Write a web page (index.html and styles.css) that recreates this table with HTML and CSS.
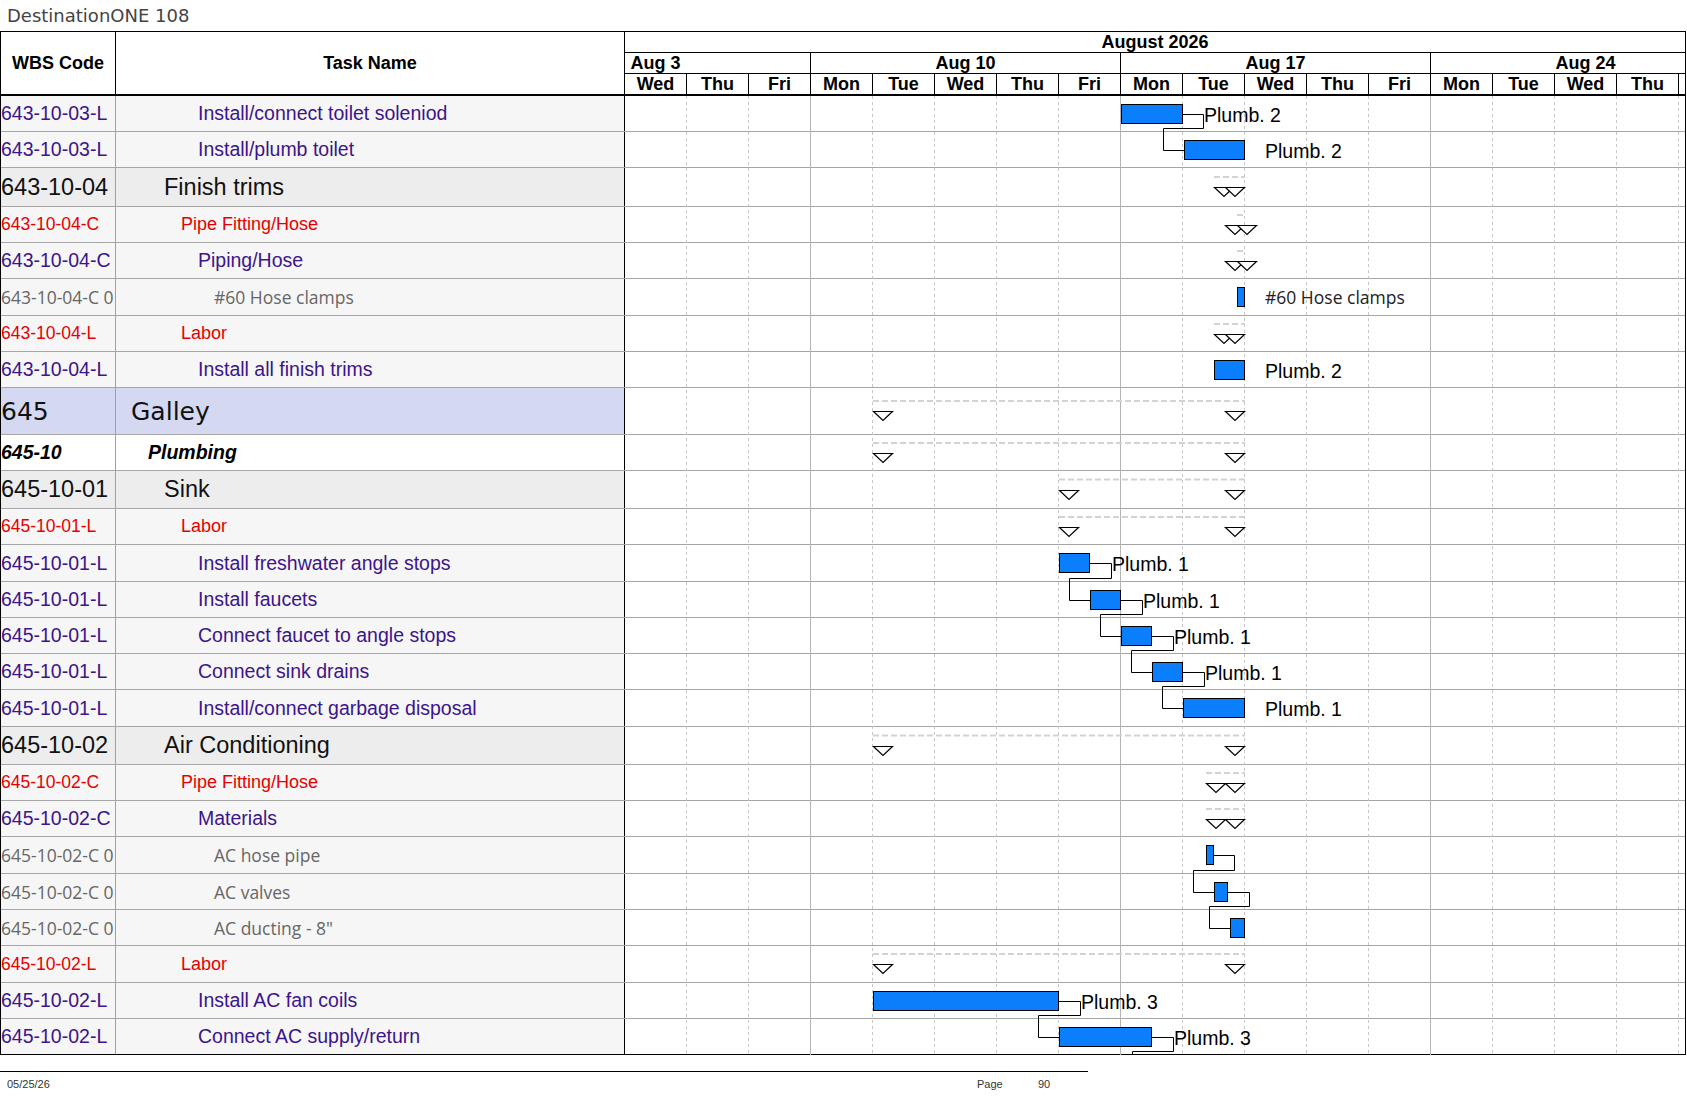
FILE: index.html
```html
<!DOCTYPE html>
<html lang="en">
<head>
<meta charset="utf-8">
<title>DestinationONE 108</title>
<link rel="stylesheet" href="styles.css">
</head>
<body>
<div class="title">DestinationONE 108</div>
<div class="sheet">
  <div class="head">
    <div class="hcell hwbs">WBS Code</div>
    <div class="hcell htask">Task Name</div>
    <div class="htime">
      <div class="months">August 2026</div>
      <div class="weeks">
        <div class="wk first">Aug 3</div>
        <div class="wk">Aug 10</div>
        <div class="wk">Aug 17</div>
        <div class="wk">Aug 24</div>
      </div>
      <div class="days">
        <div class="day">Wed</div><div class="day">Thu</div><div class="day">Fri</div>
        <div class="day">Mon</div><div class="day">Tue</div><div class="day">Wed</div><div class="day">Thu</div><div class="day">Fri</div>
        <div class="day">Mon</div><div class="day">Tue</div><div class="day">Wed</div><div class="day">Thu</div><div class="day">Fri</div>
        <div class="day">Mon</div><div class="day">Tue</div><div class="day">Wed</div><div class="day">Thu</div><div class="day"></div>
      </div>
    </div>
  </div>
  <div class="body">
    <svg class="chart" width="1060" height="959" viewBox="0 0 1060 959">
      <path class="grid-d" d="M61.5 0V959M123.5 0V959M247.5 0V959M309.5 0V959M371.5 0V959M433.5 0V959M557.5 0V959M619.5 0V959M681.5 0V959M743.5 0V959M867.5 0V959M929.5 0V959M991.5 0V959M1053.5 0V959"/>
      <path class="grid-w" d="M185.5 0V959M495.5 0V959M805.5 0V959"/>
      <path class="sum" d="M589 81H620M612 119H620M612 155H620M589 228H620M248 305H620M248 347H620M434 383.5H620M434 421H620M248 639.5H620M581 677H620M581 713H620M248 858H620"/>
      <g class="tri">
        <polygon points="589.5,91.5 608.5,91.5 599,100.5"/><polygon points="600.5,91.5 619.5,91.5 610,100.5"/>
        <polygon points="600.5,129.5 619.5,129.5 610,138.5"/><polygon points="612.5,129.5 631.5,129.5 622,138.5"/>
        <polygon points="600.5,165.5 619.5,165.5 610,174.5"/><polygon points="612.5,165.5 631.5,165.5 622,174.5"/>
        <polygon points="589.5,238.5 608.5,238.5 599,247.5"/><polygon points="600.5,238.5 619.5,238.5 610,247.5"/>
        <polygon points="248.5,315.5 267.5,315.5 258,324.5"/><polygon points="600.5,315.5 619.5,315.5 610,324.5"/>
        <polygon points="248.5,357.5 267.5,357.5 258,366.5"/><polygon points="600.5,357.5 619.5,357.5 610,366.5"/>
        <polygon points="434.5,394.5 453.5,394.5 444,403.5"/><polygon points="600.5,394.5 619.5,394.5 610,403.5"/>
        <polygon points="434.5,431.5 453.5,431.5 444,440.5"/><polygon points="600.5,431.5 619.5,431.5 610,440.5"/>
        <polygon points="248.5,650.5 267.5,650.5 258,659.5"/><polygon points="600.5,650.5 619.5,650.5 610,659.5"/>
        <polygon points="581.5,687.5 600.5,687.5 591,696.5"/><polygon points="600.5,687.5 619.5,687.5 610,696.5"/>
        <polygon points="581.5,723.5 600.5,723.5 591,732.5"/><polygon points="600.5,723.5 619.5,723.5 610,732.5"/>
        <polygon points="248.5,868.5 267.5,868.5 258,877.5"/><polygon points="600.5,868.5 619.5,868.5 610,877.5"/>
      </g>
      <g class="link">
        <path d="M558 18.5H578.5V32.5H538.5V54.5H559"/>
        <path d="M465 467.5H486.5V482.5H444.5V504.5H465"/>
        <path d="M496 504.5H517.5V518.5H475.5V540.5H496"/>
        <path d="M527 540.5H548.5V554.5H506.5V576.5H527"/>
        <path d="M558 576.5H579.5V590.5H537.5V612.5H558"/>
        <path d="M589 759.5H609.5V774.5H568.5V796.5H589"/>
        <path d="M603 796.5H624.5V810.5H584.5V832.5H605"/>
        <path d="M434 905.5H455.5V919.5H413.5V941.5H434"/>
        <path d="M527 941.5H548.5V955.5H507.5V960"/>
      </g>
      <g class="bar">
        <rect x="496.5" y="8.5" width="61" height="19"/>
        <rect x="559.5" y="44.5" width="60" height="19"/>
        <rect x="612.5" y="191.5" width="7" height="19"/>
        <rect x="589.5" y="264.5" width="30" height="19"/>
        <rect x="434.5" y="457.5" width="30" height="19"/>
        <rect x="465.5" y="494.5" width="30" height="19"/>
        <rect x="496.5" y="530.5" width="30" height="19"/>
        <rect x="527.5" y="566.5" width="30" height="19"/>
        <rect x="558.5" y="602.5" width="61" height="19"/>
        <rect x="581.5" y="749.5" width="7" height="19"/>
        <rect x="589.5" y="786.5" width="13" height="19"/>
        <rect x="605.5" y="822.5" width="14" height="19"/>
        <rect x="248.5" y="895.5" width="185" height="19"/>
        <rect x="434.5" y="931.5" width="92" height="19"/>
      </g>
      <g class="lbl">
        <text x="579" y="25.5">Plumb. 2</text>
        <text x="640" y="61.5">Plumb. 2</text>
        <text x="640" y="281.5">Plumb. 2</text>
        <text x="487" y="474.5">Plumb. 1</text>
        <text x="518" y="511.5">Plumb. 1</text>
        <text x="549" y="547.5">Plumb. 1</text>
        <text x="580" y="583.5">Plumb. 1</text>
        <text x="640" y="619.5">Plumb. 1</text>
        <text x="456" y="912.5">Plumb. 3</text>
        <text x="549" y="948.5">Plumb. 3</text>
      </g>
      <text class="lbl-mat" x="640" y="207.5">#60 Hose clamps</text>
    </svg>

    <div class="row n"><div class="wbs">643-10-03-L</div><div class="task l5">Install/connect toilet soleniod</div><div class="gcell"></div></div>
    <div class="row n"><div class="wbs">643-10-03-L</div><div class="task l5">Install/plumb toilet</div><div class="gcell"></div></div>
    <div class="row g tall"><div class="wbs">643-10-04</div><div class="task l3">Finish trims</div><div class="gcell"></div></div>
    <div class="row r"><div class="wbs">643-10-04-C</div><div class="task l4">Pipe Fitting/Hose</div><div class="gcell"></div></div>
    <div class="row n"><div class="wbs">643-10-04-C</div><div class="task l5">Piping/Hose</div><div class="gcell"></div></div>
    <div class="row m tall"><div class="wbs">643-10-04-C 0</div><div class="task l6">#60 Hose clamps</div><div class="gcell"></div></div>
    <div class="row r"><div class="wbs">643-10-04-L</div><div class="task l4">Labor</div><div class="gcell"></div></div>
    <div class="row n"><div class="wbs">643-10-04-L</div><div class="task l5">Install all finish trims</div><div class="gcell"></div></div>
    <div class="row top"><div class="wbs">645</div><div class="task l1">Galley</div><div class="gcell"></div></div>
    <div class="row p"><div class="wbs">645-10</div><div class="task l2">Plumbing</div><div class="gcell"></div></div>
    <div class="row g"><div class="wbs">645-10-01</div><div class="task l3">Sink</div><div class="gcell"></div></div>
    <div class="row r"><div class="wbs">645-10-01-L</div><div class="task l4">Labor</div><div class="gcell"></div></div>
    <div class="row n tall"><div class="wbs">645-10-01-L</div><div class="task l5">Install freshwater angle stops</div><div class="gcell"></div></div>
    <div class="row n"><div class="wbs">645-10-01-L</div><div class="task l5">Install faucets</div><div class="gcell"></div></div>
    <div class="row n"><div class="wbs">645-10-01-L</div><div class="task l5">Connect faucet to angle stops</div><div class="gcell"></div></div>
    <div class="row n"><div class="wbs">645-10-01-L</div><div class="task l5">Connect sink drains</div><div class="gcell"></div></div>
    <div class="row n tall"><div class="wbs">645-10-01-L</div><div class="task l5">Install/connect garbage disposal</div><div class="gcell"></div></div>
    <div class="row g"><div class="wbs">645-10-02</div><div class="task l3">Air Conditioning</div><div class="gcell"></div></div>
    <div class="row r"><div class="wbs">645-10-02-C</div><div class="task l4">Pipe Fitting/Hose</div><div class="gcell"></div></div>
    <div class="row n"><div class="wbs">645-10-02-C</div><div class="task l5">Materials</div><div class="gcell"></div></div>
    <div class="row m tall"><div class="wbs">645-10-02-C 0</div><div class="task l6">AC hose pipe</div><div class="gcell"></div></div>
    <div class="row m"><div class="wbs">645-10-02-C 0</div><div class="task l6">AC valves</div><div class="gcell"></div></div>
    <div class="row m"><div class="wbs">645-10-02-C 0</div><div class="task l6">AC ducting - 8"</div><div class="gcell"></div></div>
    <div class="row r tall"><div class="wbs">645-10-02-L</div><div class="task l4">Labor</div><div class="gcell"></div></div>
    <div class="row n"><div class="wbs">645-10-02-L</div><div class="task l5">Install AC fan coils</div><div class="gcell"></div></div>
    <div class="row n"><div class="wbs">645-10-02-L</div><div class="task l5">Connect AC supply/return</div><div class="gcell"></div></div>
  </div>
</div>
<div class="footer">
  <span class="f-date">05/25/26</span>
  <span class="f-page">Page</span>
  <span class="f-num">90</span>
</div>
</body>
</html>
```

FILE: styles.css
```css
* { box-sizing: border-box; }

body {
  margin: 0;
  background: #fff;
  color: #000;
  font-family: "Liberation Sans", Arial, sans-serif;
}

.title {
  height: 31px;
  padding-left: 7px;
  font-family: "DejaVu Sans", sans-serif;
  font-size: 18px;
  line-height: 31px;
  color: #444;
  white-space: nowrap;
}

.sheet {
  width: 1686px;
  border: 1px solid #000;
  border-bottom: 0;
}

/* ---------- header ---------- */
.head {
  display: flex;
  height: 64px;
  border-bottom: 2px solid #000;
}

.hcell {
  display: flex;
  align-items: center;
  justify-content: center;
  font-weight: bold;
  font-size: 18px;
  border-right: 1px solid #000;
}

.hwbs { width: 115px; }
.htask { width: 509px; }

.htime {
  flex: 1;
  display: flex;
  flex-direction: column;
  overflow: hidden;
  font-weight: bold;
  font-size: 18px;
  line-height: 20px;
}

.months {
  height: 21px;
  border-bottom: 1px solid #000;
  text-align: center;
}

.weeks {
  display: flex;
  height: 21px;
  border-bottom: 1px solid #000;
}

.wk {
  flex: 0 0 310px;
  border-right: 1px solid #000;
  text-align: center;
  white-space: nowrap;
}

.wk.first {
  flex-basis: 186px;
  padding-right: 124px;
}

.days {
  display: flex;
  height: 20px;
}

.day {
  flex: 0 0 62px;
  border-right: 1px solid #000;
  text-align: center;
  overflow: hidden;
}

/* ---------- body rows ---------- */
.body { position: relative; }

.chart {
  position: absolute;
  left: 624px;
  top: 0;
  overflow: hidden;
}

.row {
  display: flex;
  height: 36px;
  border-bottom: 1px solid #a6a6a6;
}
.row.tall { height: 37px; }
.row.g { height: 38px; }
.row.g.tall { height: 39px; }
.row.top { height: 47px; }
.row:last-child { border-bottom-color: #000; }

.wbs, .task {
  display: flex;
  align-items: center;
  white-space: nowrap;
  overflow: hidden;
  background: #f6f6f6;
}

.wbs {
  width: 115px;
  border-right: 1px solid #a0a0a0;
}

.task {
  width: 509px;
  border-right: 1px solid #000;
}

.gcell { flex: 1; background: #fff; }

.l1 { padding-left: 15px; }
.l2 { padding-left: 32px; }
.l3 { padding-left: 48px; }
.l4 { padding-left: 65px; }
.l5 { padding-left: 82px; }
.l6 { padding-left: 98px; }

/* normal task rows */
.n .wbs, .n .task {
  font-size: 19.5px;
  color: #3c148c;
}

/* red labour / fitting rows */
.r .wbs, .r .task {
  font-size: 17.5px;
  color: #e60000;
}
.r .task { font-size: 18px; }

/* material rows */
.m .wbs, .m .task {
  font-family: "Open Sans", "Noto Sans", sans-serif;
  font-size: 17.5px;
  color: #666;
}

/* level 3 group rows */
.g .wbs, .g .task {
  background: #ededed;
  color: #111;
  font-size: 23.5px;
}

/* level 1 group */
.top .wbs, .top .task {
  background: #d4d8f0;
  color: #111;
  font-family: "DejaVu Sans", sans-serif;
  font-size: 25px;
}

/* level 2 group */
.p .wbs, .p .task {
  background: #fff;
  font-weight: bold;
  font-style: italic;
  font-size: 19.5px;
}

/* ---------- chart drawing ---------- */
.grid-d {
  stroke: #c6c6c6;
  stroke-width: 1;
  stroke-dasharray: 3 3;
  fill: none;
}
.grid-w {
  stroke: #b4b4b4;
  stroke-width: 1;
  fill: none;
}
.sum {
  stroke: #d2d2d2;
  stroke-width: 2;
  stroke-dasharray: 6 3;
  fill: none;
}
.tri polygon {
  fill: #fff;
  stroke: #000;
  stroke-width: 1.2;
}
.link path {
  fill: none;
  stroke: #000;
  stroke-width: 1;
}
.bar rect {
  fill: #0b7ffb;
  stroke: #000;
  stroke-width: 1;
}
.lbl text {
  font-family: "Liberation Sans", Arial, sans-serif;
  font-size: 19.5px;
  fill: #000;
}
.lbl-mat {
  font-family: "Open Sans", "Noto Sans", sans-serif;
  font-size: 17.5px;
  fill: #222;
}

/* ---------- footer ---------- */
.footer {
  display: flex;
  width: 1088px;
  margin-top: 16px;
  border-top: 1px solid #000;
  padding-top: 6px;
  font-family: "Liberation Sans Narrow", "Liberation Sans", Arial, sans-serif;
  font-size: 11px;
  line-height: 12px;
  color: #333;
}
.f-date { width: 977px; padding-left: 7px; }
.f-page { width: 61px; }
```
